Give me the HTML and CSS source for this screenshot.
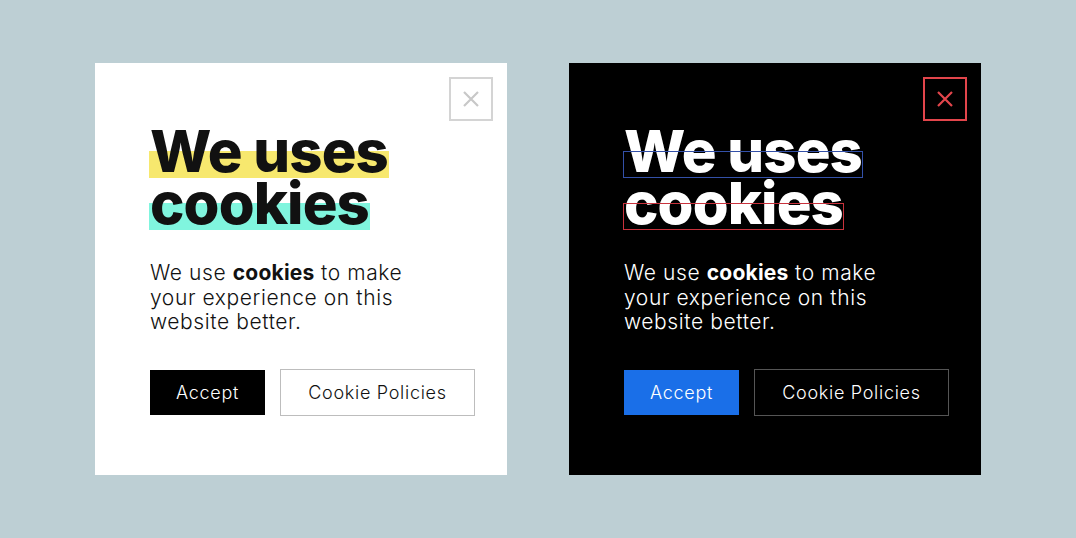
FILE: index.html
```html
<!DOCTYPE html>
<html>
  <head>
    <title>Cookie Banners</title>
    <link rel="stylesheet" href="styles.css">
  </head>
  <body>
    <div class="stage">
      <div class="card light">
        <button class="close" aria-label="Close">
          <svg viewBox="0 0 20 20" width="20" height="20"><path d="M3 3 L17 17 M17 3 L3 17" /></svg>
        </button>
        <h1>
          <span class="line yellow">We uses</span>
          <span class="line teal">cookies</span>
        </h1>
        <p class="text">We use <b>cookies</b> to make your experience on this website better.</p>
        <div class="actions">
          <button class="btn accept">Accept</button>
          <button class="btn policies">Cookie Policies</button>
        </div>
      </div>

      <div class="card dark">
        <button class="close" aria-label="Close">
          <svg viewBox="0 0 20 20" width="20" height="20"><path d="M3 3 L17 17 M17 3 L3 17" /></svg>
        </button>
        <h1>
          <span class="line yellow">We uses</span>
          <span class="line teal">cookies</span>
        </h1>
        <p class="text">We use <b>cookies</b> to make your experience on this website better.</p>
        <div class="actions">
          <button class="btn accept">Accept</button>
          <button class="btn policies">Cookie Policies</button>
        </div>
      </div>
    </div>
  </body>
</html>
```

FILE: styles.css
```css
/* Cookie banner styles */
body {
  margin: 0;
  padding: 0;
  background-color: #bdcfd4;
  font-family: Inter, "Noto Sans", sans-serif;
}

.stage {
  height: 538px;
  display: flex;
  align-items: center;
  justify-content: center;
  gap: 62px;
}

.card {
  position: relative;
  box-sizing: border-box;
  width: 412px;
  height: 412px;
  padding: 62px 55px 0;
}

.light {
  background-color: #fff;
  color: #111;
}

.dark {
  background-color: #000;
  color: #fff;
}

.close {
  position: absolute;
  top: 14px;
  right: 14px;
  width: 44px;
  height: 44px;
  box-sizing: border-box;
  padding: 0;
  background: none;
  display: flex;
  align-items: center;
  justify-content: center;
  cursor: pointer;
}

.close svg {
  fill: none;
  stroke-width: 2.2;
}

.light .close {
  border: 2px solid #d4d4d4;
}

.light .close svg {
  stroke: #c8c8c8;
}

.dark .close {
  border: 2px solid #e2454b;
}

.dark .close svg {
  stroke: #e2454b;
}

h1 {
  margin: 0;
  font-size: 58px;
  font-weight: 800;
  line-height: 52px;
  letter-spacing: -0.9px;
}

.line {
  position: relative;
  display: table;
  z-index: 0;
}

.line::before {
  content: "";
  position: absolute;
  left: -1px;
  right: -1px;
  top: 26px;
  height: 27px;
  z-index: -1;
  box-sizing: border-box;
}

.light .yellow::before {
  background-color: #f7e86e;
}

.light .teal::before {
  background-color: #80f5de;
}

.dark .line::before {
  z-index: 1;
}

.dark .yellow::before {
  border: 1px solid #3350a8;
}

.dark .teal::before {
  border: 1px solid #c8323c;
}

.text {
  margin: 32px 0 0;
  font-size: 21px;
  font-weight: 300;
  line-height: 24.5px;
  letter-spacing: 0.6px;
  max-width: 275px;
}

.text b {
  font-weight: 700;
  letter-spacing: 0.2px;
}

.actions {
  display: flex;
  align-items: center;
  gap: 15px;
  margin-top: 34px;
}

.btn {
  flex-shrink: 0;
  font-family: inherit;
  font-size: 18px;
  font-weight: 300;
  letter-spacing: 0.7px;
  border-radius: 0;
  cursor: pointer;
}

.accept {
  width: 115px;
  height: 45px;
  border: none;
  color: #fff;
}

.light .accept {
  background-color: #000;
}

.dark .accept {
  background-color: #1a6fe8;
}

.policies {
  width: 195px;
  height: 47px;
  background: none;
}

.light .policies {
  border: 1px solid #bdbdbd;
  color: #111;
}

.dark .policies {
  border: 1px solid #555;
  color: #fff;
}
```
